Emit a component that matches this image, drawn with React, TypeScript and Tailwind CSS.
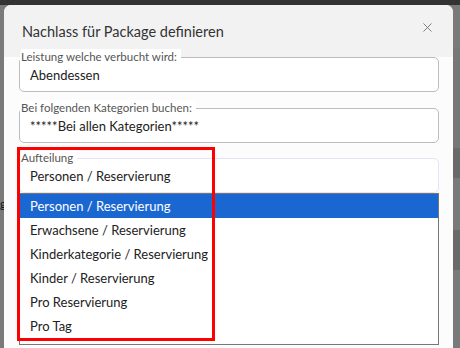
import { X } from "lucide-react";

const OPTIONS = [
  "Personen / Reservierung",
  "Erwachsene / Reservierung",
  "Kinderkategorie / Reservierung",
  "Kinder / Reservierung",
  "Pro Reservierung",
  "Pro Tag",
];

function Field({
  label,
  value,
  light,
}: {
  label: string;
  value: string;
  light?: boolean;
}) {
  return (
    <div
      className={`relative h-[35px] rounded-[5px] border bg-white ${
        light ? "border-[#e6e4f3]" : "border-[#bdbdbd]"
      }`}
    >
      <span className="absolute -top-[9px] left-0 rounded-tl-[4px] bg-white pl-[1px] pr-[4px] text-[11.5px] leading-[16px] text-[#555]">
        {label}
      </span>
      <div className="flex h-full items-center pl-[10px] pt-[2px] text-[13px] text-[#222]">
        {value}
      </div>
    </div>
  );
}

export default function App() {
  return (
    <div
      className="relative h-[348px] w-[460px] overflow-hidden bg-[#7a7a7a]"
      style={{ fontFamily: "Lato, 'Noto Sans', sans-serif" }}
    >
      <div className="h-[5px] bg-[#333]" />
      {/* page behind the overlay */}
      <div className="absolute left-0 top-[195px] text-[12px] text-[#111]">g</div>
      <div className="absolute left-[8px] top-[258px] h-px w-[12px] bg-[#111]" />
      <div className="absolute left-[440px] top-[258px] h-px w-[12px] bg-[#111]" />
      <div className="absolute right-0 top-[48px] h-[100px] w-[7px] bg-[#777]" />
      <div className="absolute right-0 top-[148px] h-[30px] w-[7px] bg-[#6a6a6a]" />
      <div className="absolute right-0 top-[230px] h-[40px] w-[7px] bg-[#6a6a6a]" />

      <div className="relative ml-[4px] w-[449px] rounded-t-[7px] bg-[#fcfcfc]">
        <div className="flex h-[52px] items-center justify-between rounded-t-[7px] bg-[#f2f2f2] pl-[18px] pr-[18px]">
          <span className="pt-[1px] text-[14.5px] text-[#333]">
            Nachlass für Package definieren
          </span>
          <X className="h-[15px] w-[15px] -translate-y-[4px] text-[#777]" strokeWidth={1.5} />
        </div>
        <div className="flex flex-col px-[15px] pr-[14px]">
          <Field label="Leistung welche verbucht wird:" value="Abendessen" />
          <div className="h-[16px]" />
          <Field
            label="Bei folgenden Kategorien buchen:"
            value="*****Bei allen Kategorien*****"
          />
          <div className="h-[15px]" />
          <Field label="Aufteilung" value="Personen / Reservierung" light />
          <div className="border border-[#777] bg-white pb-[6px]">
            {OPTIONS.map((o, i) => (
              <div
                key={o}
                className={`flex h-[24px] items-center pl-[10px] pt-[2px] text-[13px] ${
                  i === 0 ? "bg-[#1a67d2] text-white" : "text-[#222]"
                }`}
              >
                {o}
              </div>
            ))}
          </div>
          <div className="h-[20px]" />
        </div>
      </div>

      <div className="pointer-events-none absolute left-[17px] top-[147px] h-[194px] w-[198px] border-[3px] border-[#f00]" />
    </div>
  );
}
